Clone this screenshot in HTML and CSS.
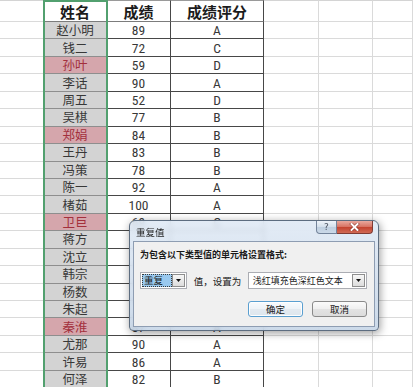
FILE: index.html
```html
<!DOCTYPE html>
<html lang="zh-CN">
<head>
<meta charset="utf-8">
<title>重复值</title>
<link rel="stylesheet" href="styles.css">
</head>
<body>
<div class="sheet">
  <div class="c e top"></div><div class="c hn h top">姓名</div><div class="c s h top">成绩</div><div class="c s h top">成绩评分</div><div class="c g top"></div><div class="c g top"></div><div class="c g top"></div>

  <div class="c e"></div><div class="c n">赵小明</div><div class="c s">89</div><div class="c s">A</div><div class="c g"></div><div class="c g"></div><div class="c g"></div>
  <div class="c e"></div><div class="c n">钱二</div><div class="c s">72</div><div class="c s">C</div><div class="c g"></div><div class="c g"></div><div class="c g"></div>
  <div class="c e"></div><div class="c n dup">孙叶</div><div class="c s">59</div><div class="c s">D</div><div class="c g"></div><div class="c g"></div><div class="c g"></div>
  <div class="c e"></div><div class="c n">李话</div><div class="c s">90</div><div class="c s">A</div><div class="c g"></div><div class="c g"></div><div class="c g"></div>
  <div class="c e"></div><div class="c n">周五</div><div class="c s">52</div><div class="c s">D</div><div class="c g"></div><div class="c g"></div><div class="c g"></div>
  <div class="c e"></div><div class="c n">吴棋</div><div class="c s">77</div><div class="c s">B</div><div class="c g"></div><div class="c g"></div><div class="c g"></div>
  <div class="c e"></div><div class="c n dup">郑娟</div><div class="c s">84</div><div class="c s">B</div><div class="c g"></div><div class="c g"></div><div class="c g"></div>
  <div class="c e"></div><div class="c n">王丹</div><div class="c s">83</div><div class="c s">B</div><div class="c g"></div><div class="c g"></div><div class="c g"></div>
  <div class="c e"></div><div class="c n">冯策</div><div class="c s">78</div><div class="c s">B</div><div class="c g"></div><div class="c g"></div><div class="c g"></div>
  <div class="c e"></div><div class="c n">陈一</div><div class="c s">92</div><div class="c s">A</div><div class="c g"></div><div class="c g"></div><div class="c g"></div>
  <div class="c e"></div><div class="c n">楮茹</div><div class="c s">100</div><div class="c s">A</div><div class="c g"></div><div class="c g"></div><div class="c g"></div>
  <div class="c e"></div><div class="c n dup">卫巨</div><div class="c s">69</div><div class="c s">C</div><div class="c g"></div><div class="c g"></div><div class="c g"></div>
  <div class="c e"></div><div class="c n">蒋方</div><div class="c s"></div><div class="c s"></div><div class="c g"></div><div class="c g"></div><div class="c g"></div>
  <div class="c e"></div><div class="c n">沈立</div><div class="c s"></div><div class="c s"></div><div class="c g"></div><div class="c g"></div><div class="c g"></div>
  <div class="c e"></div><div class="c n">韩宗</div><div class="c s"></div><div class="c s"></div><div class="c g"></div><div class="c g"></div><div class="c g"></div>
  <div class="c e"></div><div class="c n">杨数</div><div class="c s"></div><div class="c s"></div><div class="c g"></div><div class="c g"></div><div class="c g"></div>
  <div class="c e"></div><div class="c n">朱起</div><div class="c s"></div><div class="c s"></div><div class="c g"></div><div class="c g"></div><div class="c g"></div>
  <div class="c e"></div><div class="c n dup">秦淮</div><div class="c s">87</div><div class="c s">A</div><div class="c g"></div><div class="c g"></div><div class="c g"></div>
  <div class="c e"></div><div class="c n">尤那</div><div class="c s">90</div><div class="c s">A</div><div class="c g"></div><div class="c g"></div><div class="c g"></div>
  <div class="c e"></div><div class="c n">许易</div><div class="c s">86</div><div class="c s">A</div><div class="c g"></div><div class="c g"></div><div class="c g"></div>
  <div class="c e"></div><div class="c n">何泽</div><div class="c s">82</div><div class="c s">B</div><div class="c g"></div><div class="c g"></div><div class="c g"></div>
</div>

<div class="sel"></div>

<div class="dlg">
  <div class="tbar">
    <span class="title">重复值</span>
    <div class="caps">
      <span class="help">?</span>
      <span class="close">
        <svg width="11" height="8" viewBox="0 0 11 8">
          <path d="M2.5 1 L8.5 7 M8.5 1 L2.5 7" stroke="#7a3128" stroke-width="3.4" stroke-linecap="square" fill="none" opacity="0.55"/>
          <path d="M2.5 1 L8.5 7 M8.5 1 L2.5 7" stroke="#ffffff" stroke-width="1.8" stroke-linecap="square" fill="none"/>
        </svg>
      </span>
    </div>
  </div>
  <div class="body">
    <div class="prompt">为包含以下类型值的单元格设置格式:</div>
    <div class="row">
      <div class="cb cb1">
        <span class="selv">重复</span>
        <span class="arrow"><svg width="5" height="3" viewBox="0 0 5 3"><polygon points="0,0 5,0 2.5,3" fill="#111"/></svg></span>
      </div>
      <span class="lbl">值，设置为</span>
      <div class="cb cb2">
        <span class="val">浅红填充色深红色文本</span>
        <span class="arrow"><svg width="5" height="3" viewBox="0 0 5 3"><polygon points="0,0 5,0 2.5,3" fill="#111"/></svg></span>
      </div>
    </div>
    <div class="btns">
      <span class="btn def">确定</span>
      <span class="btn">取消</span>
    </div>
  </div>
</div>
</body>
</html>
```

FILE: styles.css
```css
* { box-sizing: border-box; }

body {
  margin: 0;
  width: 413px;
  height: 387px;
  overflow: hidden;
  position: relative;
  background: #ffffff;
  font-family: "Noto Sans CJK SC", "Noto Sans", sans-serif;
}

.sheet {
  display: grid;
  grid-template-columns: 44px 63px 64px 93px 55px 54px 40px;
  grid-template-rows: 22px repeat(21, 17.45px);
}

.c {
  display: flex;
  align-items: center;
  justify-content: center;
  border-right: 1px solid #dadada;
  border-bottom: 1px solid #dadada;
  font-size: 12.5px;
  line-height: 14px;
  color: #383838;
  white-space: nowrap;
  min-width: 0;
}

.top { border-top: 1px solid #d4d4d4; }

.e { border-right: none; }

.n {
  background: #d3d3d3;
  border-bottom-color: #8e8e8e;
  border-right-color: #555555;
}

.n.dup {
  background: #d5a6ac;
  color: #a3303c;
}

.s {
  border-color: #474747;
  font-family: "Liberation Sans Narrow", "Roboto Condensed", Roboto, "Liberation Sans", sans-serif;
  font-size: 13.5px;
}

.hn {
  background: #ffffff;
  border-right-color: #555555;
}

.h {
  font-family: "Noto Sans CJK SC", sans-serif;
  font-weight: 700;
  font-size: 15px;
  line-height: 17px;
  color: #1c1c1c;
  border-bottom-color: #7c7c7c;
}

.top.s { border-top-color: #9a9a9a; }

.sel {
  position: absolute;
  left: 43px;
  top: 0;
  width: 65px;
  height: 387px;
  border: 2px solid #52a06f;
  border-bottom: none;
  pointer-events: none;
}

/* dialog */
.dlg {
  position: absolute;
  left: 129px;
  top: 220px;
  width: 250px;
  height: 111px;
  border: 1px solid #5d6d80;
  border-radius: 6px 6px 4px 4px;
  background: linear-gradient(rgba(222, 232, 244, 0.86), rgba(196, 212, 230, 0.86));
  backdrop-filter: blur(2.5px);
  box-shadow: 1px 2px 8px rgba(0, 0, 0, 0.4);
  padding: 0 3px 3px 3px;
  display: flex;
  flex-direction: column;
}

.tbar {
  height: 20px;
  display: flex;
  align-items: flex-start;
  flex-shrink: 0;
}

.title {
  font-size: 9.5px;
  line-height: 12px;
  color: #1e1e1e;
  padding: 5px 0 0 3px;
}

.caps {
  margin-left: auto;
  margin-right: 2px;
  display: flex;
}

.help {
  width: 21px;
  height: 13px;
  border: 1px solid #73839a;
  border-top: none;
  border-radius: 0 0 0 4px;
  background: linear-gradient(#eef3f9, #d3dfeb 50%, #bfcfe0 51%, #cbd9e8);
  font-family: "DejaVu Sans", sans-serif;
  font-size: 9px;
  line-height: 12px;
  color: #4a5260;
  text-align: center;
}

.close {
  width: 36px;
  height: 13px;
  border: 1px solid #7f3b33;
  border-top: none;
  border-left: none;
  border-radius: 0 0 4px 0;
  background: linear-gradient(#e9a99e, #d87363 48%, #c4432f 52%, #d06a55);
  display: flex;
  align-items: center;
  justify-content: center;
}

.body {
  flex: 1;
  background: #f0f0f0;
  border: 1px solid #8e9db2;
  padding: 6px 7px 0 6px;
  display: flex;
  flex-direction: column;
}

.prompt {
  margin-top: 1px;
  font-size: 9px;
  line-height: 12px;
  font-weight: 700;
  color: #1a1a1a;
}

.row {
  margin-top: 11px;
  height: 17px;
  display: flex;
  align-items: center;
}

.cb {
  height: 17px;
  border: 1px solid #abadb3;
  background: #ffffff;
  display: flex;
  align-items: stretch;
  padding: 1px;
}

.cb1 { width: 47px; }

.cb2 {
  width: 120px;
  margin-left: 8px;
}

.selv {
  flex: 1;
  background: #99c9ef;
  outline: 1px dotted #3a3a3a;
  outline-offset: -1px;
  font-size: 9.5px;
  line-height: 13px;
  padding-left: 2px;
  color: #1a1a1a;
}

.val {
  flex: 1;
  font-size: 9px;
  line-height: 13px;
  padding-left: 3px;
  color: #1a1a1a;
}

.arrow {
  width: 13px;
  border: 1px solid #8e8e8e;
  background: linear-gradient(#f7f7f7, #dcdcdc);
  display: flex;
  align-items: center;
  justify-content: center;
}

.lbl {
  margin-left: 7px;
  width: 46px;
  font-size: 9.5px;
  line-height: 12px;
  color: #1a1a1a;
  white-space: nowrap;
}

.btns {
  margin-top: 12px;
  display: flex;
  justify-content: flex-end;
  gap: 9px;
}

.btn {
  width: 55px;
  height: 16px;
  border: 1px solid #8a8a8a;
  border-radius: 3px;
  background: linear-gradient(#fbfbfb, #efefef 50%, #e3e3e3 51%, #dcdcdc);
  font-size: 9.5px;
  line-height: 12px;
  color: #1a1a1a;
  display: flex;
  align-items: center;
  justify-content: center;
}

.btn.def {
  border-color: #5a9fd0;
  background: linear-gradient(#f7fbfe, #eef3f7 50%, #e3eaf0 51%, #dde6ee);
  box-shadow: inset 0 0 0 1px rgba(255, 255, 255, 0.9);
}
```
